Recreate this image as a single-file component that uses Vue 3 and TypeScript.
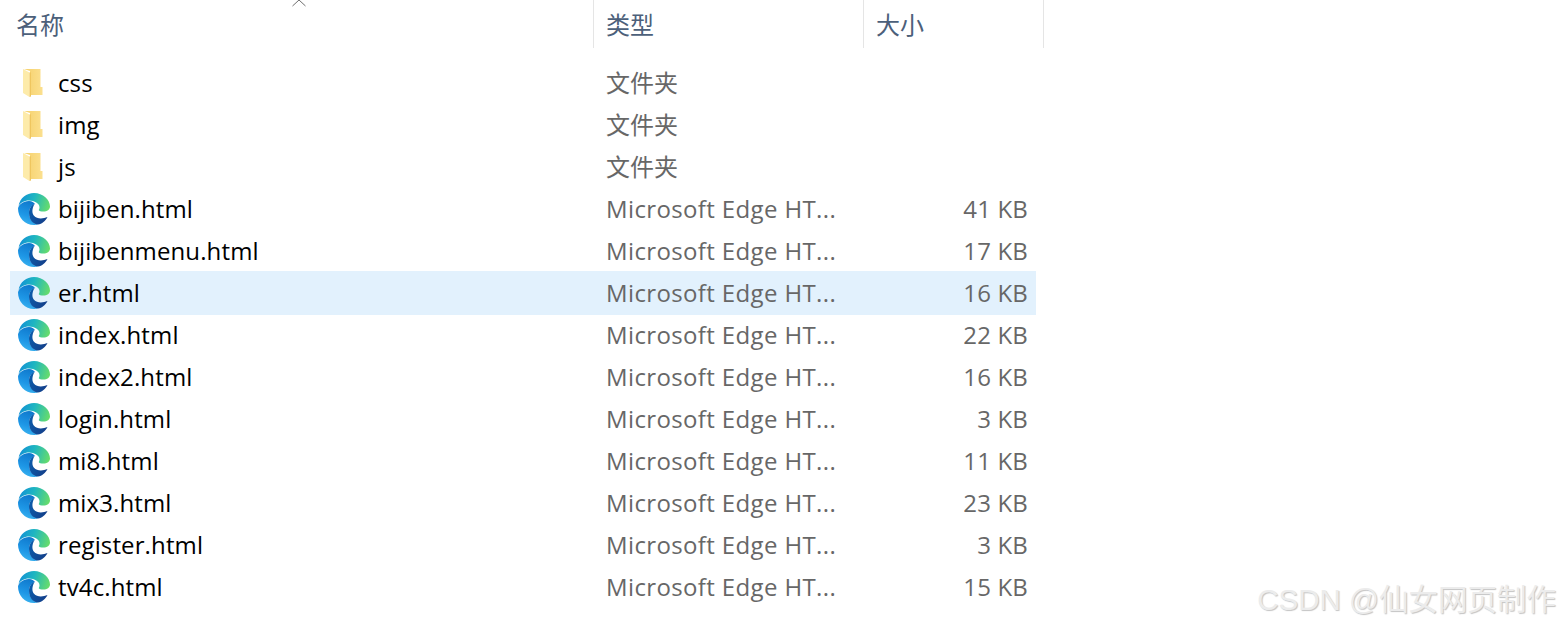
<script setup lang="ts">
interface FileRow {
  name: string
  type: string
  size?: string
  folder?: boolean
  selected?: boolean
}

const EDGE = 'Microsoft Edge HT...'

const rows: FileRow[] = [
  { name: 'css', type: '文件夹', folder: true },
  { name: 'img', type: '文件夹', folder: true },
  { name: 'js', type: '文件夹', folder: true },
  { name: 'bijiben.html', type: EDGE, size: '41 KB' },
  { name: 'bijibenmenu.html', type: EDGE, size: '17 KB' },
  { name: 'er.html', type: EDGE, size: '16 KB', selected: true },
  { name: 'index.html', type: EDGE, size: '22 KB' },
  { name: 'index2.html', type: EDGE, size: '16 KB' },
  { name: 'login.html', type: EDGE, size: '3 KB' },
  { name: 'mi8.html', type: EDGE, size: '11 KB' },
  { name: 'mix3.html', type: EDGE, size: '23 KB' },
  { name: 'register.html', type: EDGE, size: '3 KB' },
  { name: 'tv4c.html', type: EDGE, size: '15 KB' },
]
</script>

<template>
  <div class="explorer">
    <svg class="sort-arrow" width="14" height="7" viewBox="0 0 14 7">
      <polyline points="0.5,6 7,0 13.5,6" fill="none" stroke="#6f6f6f" stroke-width="1" />
    </svg>

    <header class="head">
      <div class="col col-name">名称</div>
      <div class="col col-type">类型</div>
      <div class="col col-size">大小</div>
    </header>

    <svg width="0" height="0" class="defs">
      <defs>
        <linearGradient id="edge-top" x1="0" y1="0.4" x2="1" y2="0.6">
          <stop offset="0" stop-color="#1190d6" />
          <stop offset="0.45" stop-color="#1fb6c0" />
          <stop offset="1" stop-color="#66dc6c" />
        </linearGradient>
        <linearGradient id="edge-left" x1="0.6" y1="0" x2="0.3" y2="1">
          <stop offset="0" stop-color="#0f78cc" />
          <stop offset="0.6" stop-color="#1e97e6" />
          <stop offset="1" stop-color="#3cb4f0" />
        </linearGradient>
        <linearGradient id="edge-bottom" x1="0" y1="0.2" x2="1" y2="0.7">
          <stop offset="0" stop-color="#0b5cab" />
          <stop offset="1" stop-color="#143f8a" />
        </linearGradient>
        <linearGradient id="folder-back" x1="0" y1="0" x2="1" y2="0">
          <stop offset="0" stop-color="#f6d06a" />
          <stop offset="1" stop-color="#fbe08f" />
        </linearGradient>
      </defs>
    </svg>

    <div class="list">
      <div v-for="row in rows" :key="row.name" class="row" :class="{ selected: row.selected }">
        <div class="name">
          <span class="icon">
            <svg v-if="row.folder" class="folder" width="20" height="28" viewBox="0 0 20 28">
              <path d="M1 0h16.500v18H19.500v8H7V2z" fill="url(#folder-back)" />
              <path d="M0 0l6.500 3.500V28L0 24z" fill="#fdebaa" />
              <path d="M6.500 3.500L8 3.200V27.500L6.500 28z" fill="#efc65f" />
            </svg>
            <svg v-else width="32" height="32" viewBox="0 0 32 32">
              <path fill="url(#edge-left)" d="M0 15.500C.5 12 5 8 11 8c3 0 5 1.500 6 3-4 1-6 5-6 9 0 6 4 10.500 9 11.600-1.500.4-3 .4-4 .4C7 32 0 24.500 0 15.500z" />
              <path fill="url(#edge-bottom)" d="M11 20c0 7 4 11 9 11.600 4-.6 7.500-3.600 9.500-7.600-4.500 2-10.500 2.200-13.500-1.200-2.200-2.600-2.200-7 .5-11.800-3.500 1-5.500 5-5.500 9z" />
              <path fill="url(#edge-top)" d="M.5 13C2 5 8.500 0 16 0c9 0 16 6.500 16 13.500 0 3-3 5-6.500 5-2.500 0-4.500-.5-4.700-1.300-.1-.7.700-1 .700-3C21.500 10.500 16.500 7.500 11 7.500 6 7.500 2 10 .5 13z" />
            </svg>
          </span>
          {{ row.name }}
        </div>
        <div class="type" :class="{ 'type-long': !row.folder }">{{ row.type }}</div>
        <div class="size">{{ row.size }}</div>
      </div>
    </div>

    <div class="watermark">CSDN @仙女网页制作</div>
  </div>
</template>

<style scoped>
.explorer {
  position: relative;
  width: 1559px;
  height: 627px;
  overflow: hidden;
  background: #fff;
  font-family: "Open Sans", "Noto Sans CJK SC", sans-serif;
  font-size: 24px;
}

.defs {
  position: absolute;
}

.sort-arrow {
  position: absolute;
  left: 292px;
  top: 0;
}

.head {
  display: flex;
  height: 48px;
  color: #4c607a;
  font-family: "Noto Sans CJK SC", sans-serif;
}

.col {
  box-sizing: border-box;
  padding-top: 6px;
  border-right: 1px solid #e5e5e5;
  line-height: 36px;
}

.col-name {
  width: 594px;
  padding-left: 16px;
}

.col-type {
  width: 270px;
  padding-left: 12px;
}

.col-size {
  width: 180px;
  padding-left: 12px;
}

.list {
  display: flex;
  flex-direction: column;
  width: 1026px;
  margin: 14px 0 0 10px;
}

.row {
  display: grid;
  grid-template-columns: 596px 1fr auto;
  align-items: center;
  box-sizing: border-box;
  height: 42px;
  padding: 0 8px;
  line-height: 42px;
  white-space: nowrap;
}

.row.selected {
  height: 44px;
  margin: -1px 0;
  background: #e2f1fd;
}

.name {
  display: flex;
  align-items: center;
  gap: 8px;
  color: #000;
  letter-spacing: 0.12px;
}

.icon {
  display: flex;
  align-items: center;
  width: 32px;
  height: 32px;
}

.folder {
  margin-left: 5px;
}

.type,
.size {
  color: #676767;
}

.type {
  margin-left: -8px;
}

.type-long {
  letter-spacing: 0.37px;
}

.size {
  letter-spacing: 0.15px;
}

.watermark {
  position: absolute;
  right: 3px;
  bottom: 8px;
  color: #ececec;
  font-family: "Liberation Sans", "Noto Sans CJK SC", sans-serif;
  font-size: 29.5px;
  line-height: 38px;
  white-space: nowrap;
  text-shadow: 1px 1px 1px #c4c4c4;
}
</style>

<style>
html,
body {
  background: #fff;
}
</style>
